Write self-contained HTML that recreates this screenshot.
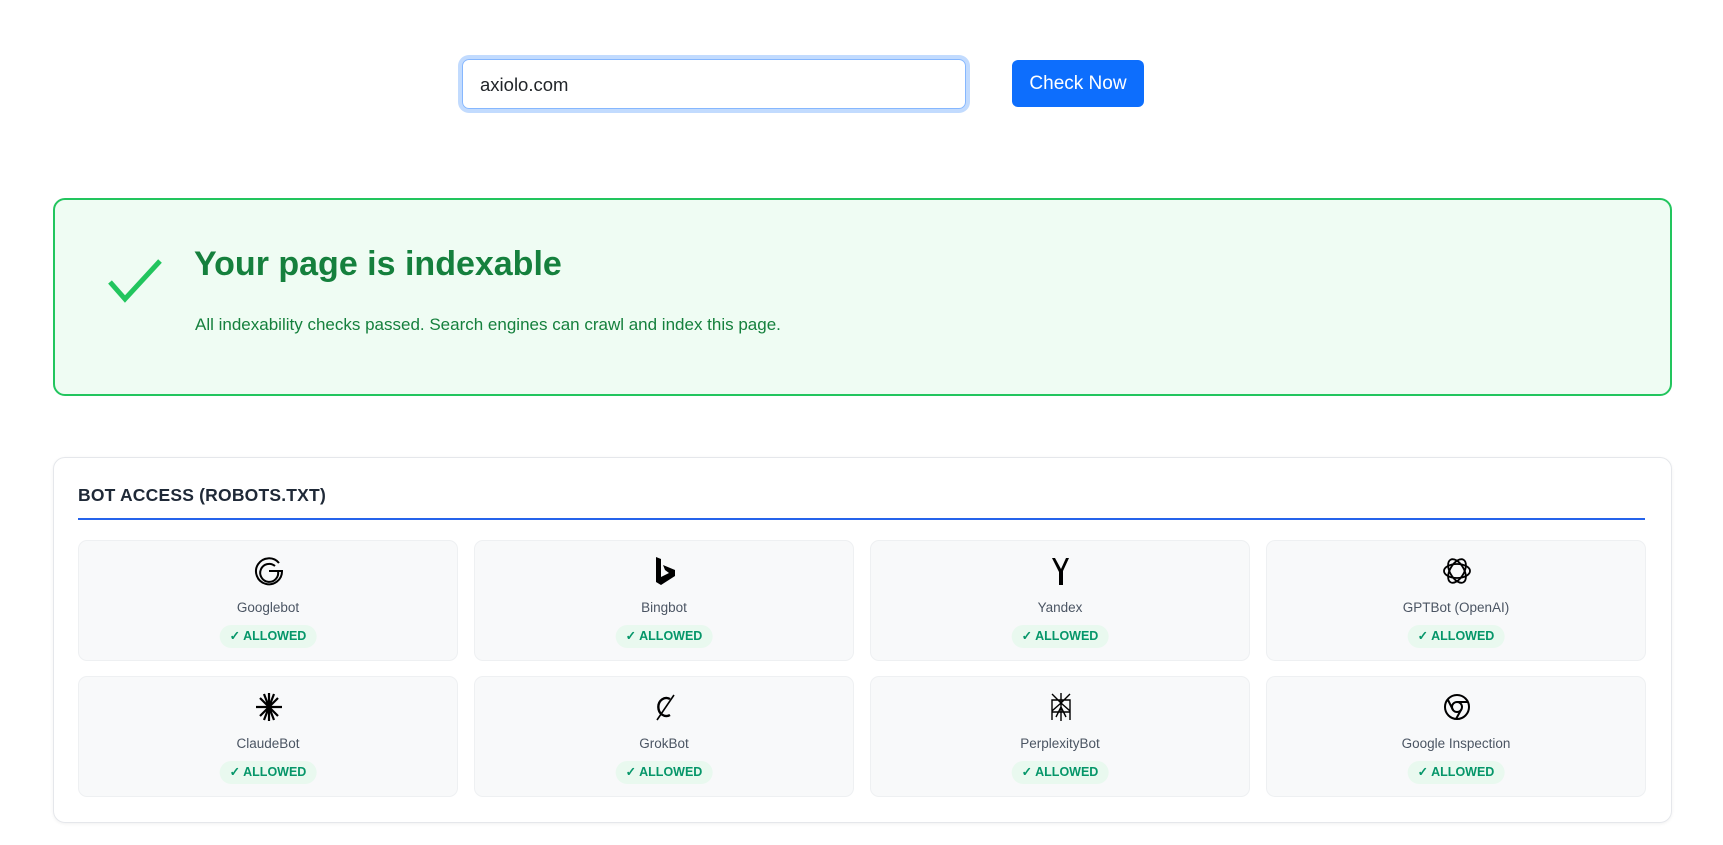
<!DOCTYPE html>
<html><head><meta charset="utf-8"><style>
*{box-sizing:border-box;margin:0;padding:0}
body{width:1723px;height:845px;background:#fff;font-family:"Liberation Sans",sans-serif;position:relative;overflow:hidden}
.inp{position:absolute;left:462px;top:59px;width:504px;height:50px;border:1px solid #86b7fe;border-radius:7px;box-shadow:0 0 0 4px #c2dbfe;padding-left:17px;font-size:18.5px;line-height:50px;color:#212529}
.btn{position:absolute;left:1012px;top:60px;width:132px;height:47px;background:#0d6efd;border-radius:6px;color:#fff;font-size:19px;line-height:47px;text-align:center}
.ok{position:absolute;left:53px;top:198px;width:1619px;height:198px;background:#effcf3;border:2px solid #22c55e;border-radius:12px}
.ok h1{position:absolute;left:139px;top:45px;font-size:34px;font-weight:bold;color:#15803d;letter-spacing:0}
.ok p{position:absolute;left:140px;top:115px;font-size:17px;color:#15803d}
.ok svg{position:absolute;left:52px;top:58px}
.bots{position:absolute;left:53px;top:457px;width:1619px;height:366px;border:1px solid #e5e7eb;border-radius:12px;box-shadow:0 1px 3px rgba(0,0,0,.06)}
.bots h2{position:absolute;left:24px;top:27px;font-size:17.5px;font-weight:bold;color:#1f2937;letter-spacing:.2px}
.line{position:absolute;left:24px;top:60px;width:1567px;height:2px;background:#2563eb}
.card{position:absolute;width:380px;height:121px;background:#f8f9fa;border:1px solid #eef0f2;border-radius:9px;text-align:center}
.card svg{position:absolute;left:174px;top:14px}
.card .n{position:absolute;left:0;right:0;top:59px;font-size:13.5px;color:#4b5563}
.card .b{position:absolute;left:50%;transform:translateX(-50%);top:84px;height:23px;padding:0 10px;border-radius:12px;background:#e9f9ef;color:#059669;font-size:12.5px;font-weight:bold;line-height:23px;white-space:nowrap}
</style></head><body>
<div class="inp">axiolo.com</div>
<div class="btn">Check Now</div>
<div class="ok">
<svg width="56" height="46" viewBox="0 0 56 46"><path d="M3 24 L18 41 L53 3" fill="none" stroke="#22c55e" stroke-width="5"/></svg>
<h1>Your page is indexable</h1>
<p>All indexability checks passed. Search engines can crawl and index this page.</p>
</div>
<div class="bots">
<h2>BOT ACCESS (ROBOTS.TXT)</h2>
<div class="line"></div>

<div class="card" style="left:24px;top:82px"><svg width="32" height="32" viewBox="0 0 32 32"><path d="M26 8A13 13 0 1 0 29 16H16" fill="none" stroke="#000" stroke-width="2"/><path d="M22 11A9 9 0 1 0 25 16" fill="none" stroke="#000" stroke-width="2"/></svg><div class="n">Googlebot</div><div class="b">✓ ALLOWED</div></div>
<div class="card" style="left:420px;top:82px"><svg width="32" height="32" viewBox="0 0 32 32"><path d="M7 2L12 4V22L20 18L16 15L14 10L26 15V21L12 30L7 27Z" fill="#000"/></svg><div class="n">Bingbot</div><div class="b">✓ ALLOWED</div></div>
<div class="card" style="left:816px;top:82px"><svg width="32" height="32" viewBox="0 0 32 32"><path d="M7 3L14 17V30H18V16L24 3H21L16 14L10 3Z" fill="#000"/></svg><div class="n">Yandex</div><div class="b">✓ ALLOWED</div></div>
<div class="card" style="left:1212px;top:82px"><svg width="32" height="32" viewBox="0 0 32 32"><g fill="none" stroke="#000" stroke-width="1.8"><ellipse cx="16" cy="16" rx="13" ry="7"/><ellipse cx="16" cy="16" rx="13" ry="7" transform="rotate(60 16 16)"/><ellipse cx="16" cy="16" rx="13" ry="7" transform="rotate(120 16 16)"/></g></svg><div class="n">GPTBot (OpenAI)</div><div class="b">✓ ALLOWED</div></div>

<div class="card" style="left:24px;top:218px"><svg width="32" height="32" viewBox="0 0 32 32"><g stroke="#000" stroke-width="2.2"><path d="M16 2V30M3 16H29M7 7L25 25M25 7L7 25M11 3L21 29M21 3L11 29"/></g></svg><div class="n">ClaudeBot</div><div class="b">✓ ALLOWED</div></div>
<div class="card" style="left:420px;top:218px"><svg width="32" height="32" viewBox="0 0 32 32"><g fill="none" stroke="#000" stroke-width="2.4"><path d="M21 8A8 9 0 1 0 21 24"/><path d="M25 4L8 29" stroke-width="1.6"/></g></svg><div class="n">GrokBot</div><div class="b">✓ ALLOWED</div></div>
<div class="card" style="left:816px;top:218px"><svg width="32" height="32" viewBox="0 0 32 32"><g fill="none" stroke="#000" stroke-width="1.4"><path d="M16 2V30M7 3L16 12L25 3M7 9H25V21H7ZM7 29V20L16 12L25 20V29M16 16L11 26M16 16L21 26"/></g></svg><div class="n">PerplexityBot</div><div class="b">✓ ALLOWED</div></div>
<div class="card" style="left:1212px;top:218px"><svg width="32" height="32" viewBox="0 0 32 32"><g fill="none" stroke="#000" stroke-width="2"><circle cx="16" cy="16" r="12"/><circle cx="16" cy="16" r="5"/><path d="M16 11H27M12 19L7 9M20 19L15 28"/></g></svg><div class="n">Google Inspection</div><div class="b">✓ ALLOWED</div></div>
</div>
</body></html>
